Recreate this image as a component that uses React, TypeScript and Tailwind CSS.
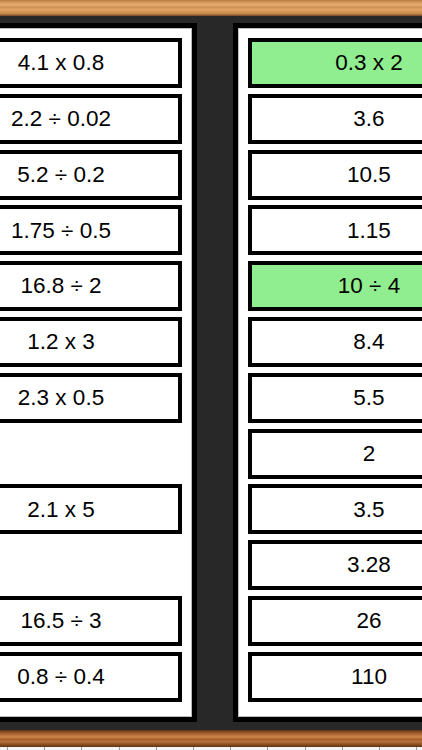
const leftCells: (string | null)[] = [
  '4.1 x 0.8',
  '2.2 ÷ 0.02',
  '5.2 ÷ 0.2',
  '1.75 ÷ 0.5',
  '16.8 ÷ 2',
  '1.2 x 3',
  '2.3 x 0.5',
  null,
  '2.1 x 5',
  null,
  '16.5 ÷ 3',
  '0.8 ÷ 0.4',
];

const rightCells: { label: string; matched?: boolean }[] = [
  { label: '0.3 x 2', matched: true },
  { label: '3.6' },
  { label: '10.5' },
  { label: '1.15' },
  { label: '10 ÷ 4', matched: true },
  { label: '8.4' },
  { label: '5.5' },
  { label: '2' },
  { label: '3.5' },
  { label: '3.28' },
  { label: '26' },
  { label: '110' },
];

function Cell({ label, matched }: { label: string | null; matched?: boolean }) {
  if (!label) return <div className="h-[50px]" />;
  return (
    <div
      className={`h-[50px] border-[4px] border-black flex items-center justify-center text-[22.5px] text-black ${
        matched ? 'bg-[#90ee90]' : 'bg-white'
      }`}
    >
      {label}
    </div>
  );
}

function Panel({ children }: { children: React.ReactNode }) {
  return (
    <div className="w-[272px] h-[699px] shrink-0 border-[5px] border-black bg-white px-[10px] pt-[10px] shadow-[inset_0_0_0_1px_#bbb]">
      <div className="flex flex-col gap-[5.8px]">{children}</div>
    </div>
  );
}

export default function App() {
  return (
    <div
      className="w-[422px] h-[750px] overflow-hidden bg-[#282828] flex flex-col"
      style={{ fontFamily: '"Liberation Sans", Arial, sans-serif' }}
    >
      {/* top rail */}
      <div className="h-[16px] shrink-0 bg-[linear-gradient(180deg,#b97b42_0%,#d99d5e_18%,#e6ad6f_32%,#c98d50_45%,#e0a667_58%,#d69858_72%,#c4874a_86%,#6e4523_100%)]" />

      <div className="h-[714px] shrink-0 pt-[7px] overflow-hidden">
        <div className="flex gap-[36px] ml-[-75px]">
          <Panel>
            {leftCells.map((c, i) => (
              <Cell key={i} label={c} />
            ))}
          </Panel>
          <Panel>
            {rightCells.map((c, i) => (
              <Cell key={i} label={c.label} matched={c.matched} />
            ))}
          </Panel>
        </div>
      </div>

      {/* bottom rail */}
      <div className="h-[17px] shrink-0 bg-[linear-gradient(180deg,#5a3416_0%,#8c4f22_12%,#b86f38_28%,#c98548_40%,#a8612d_55%,#b5703a_68%,#8e5024_84%,#5e3314_100%)]" />
      <div className="flex-1 bg-[#f4f4f4] bg-[repeating-linear-gradient(90deg,#9a9a9a_0_1px,transparent_1px_37.2px)] bg-[position:7px_0]" />
    </div>
  );
}
